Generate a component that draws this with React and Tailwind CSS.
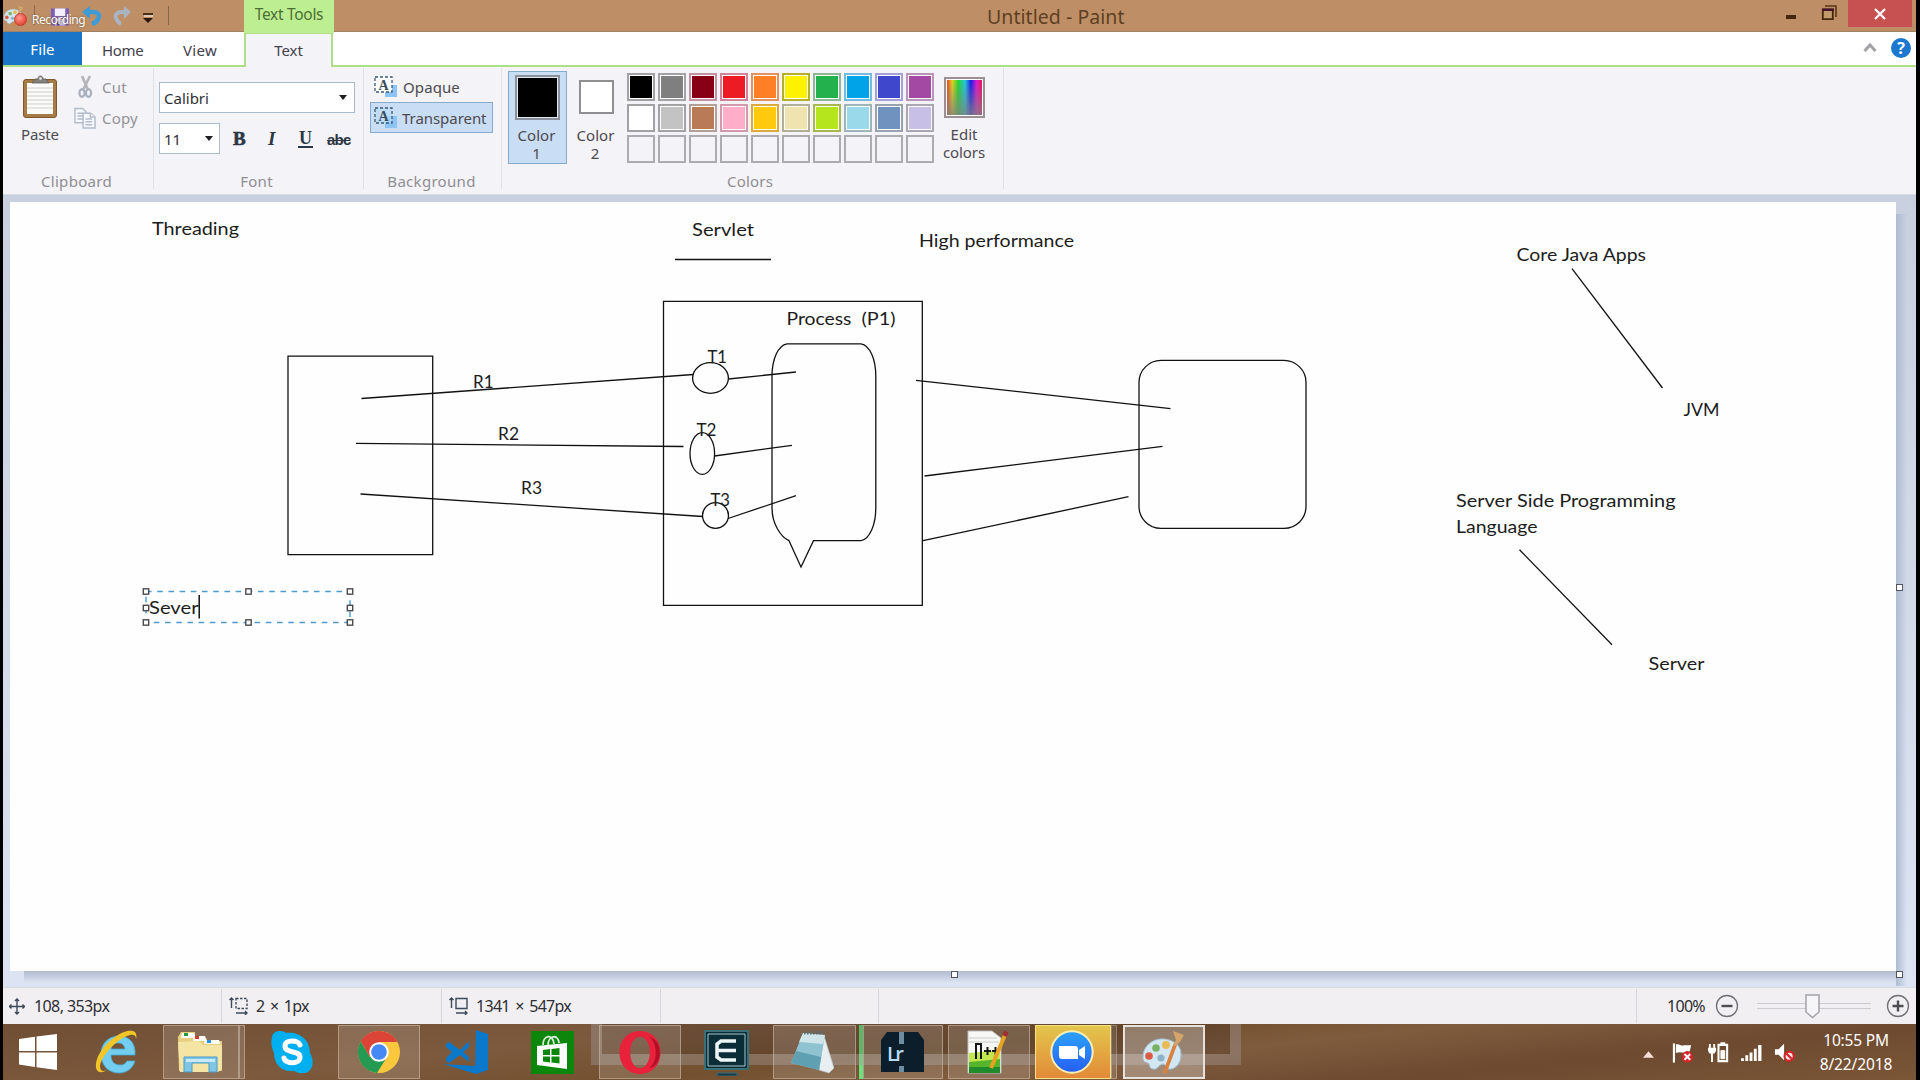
import React from "react";

const ui = "font-['Noto_Sans','Open_Sans',sans-serif]";

/* ---------- title bar ---------- */

function PaletteIcon({ className }) {
  return (
    <svg viewBox="0 0 44 44" className={className}>
      <path d="M2 27C2 15 13 8 23 9c9 1 17 6 17 15 0 8-4 14-10 15-5 1-4-5-8-5s-5 6-10 5-2-5-5-6-5-1-5-6z" fill="#d3e7f2" stroke="#a3c4d8" strokeWidth="1" />
      <circle cx="8" cy="26" r="3.800" fill="#dd5a45" />
      <circle cx="15" cy="18" r="3.800" fill="#79b265" />
      <circle cx="25" cy="15" r="4" fill="#e8bd58" />
      <circle cx="20" cy="28" r="3.600" fill="#8fb3c6" />
      <path d="M24 42l10-27" stroke="#d9813f" strokeWidth="3.600" strokeLinecap="round" />
      <path d="M32 16l3-6-3-9 11 4-4 7-5 4z" fill="#d5a468" />
    </svg>
  );
}

function TitleBar() {
  return (
    <div className="relative flex h-[32px] shrink-0 items-start border-b border-[#a08260] bg-[#be8f66]">
      <PaletteIcon className="mt-[5px] h-[21px] w-[21px]" />
      <div className="ml-[10px] mt-[5px] h-[20px] w-px bg-[#8d6c4e]" />
      <svg viewBox="0 0 20 20" className="ml-[16px] mt-[7px] h-[20px] w-[19px]">
        <path d="M0 1h19v18H0z" fill="#7b5fb4" />
        <path d="M4 1h11v8H4z" fill="#f3effa" />
        <path d="M4 12h11v7H4z" fill="#c9bce4" />
        <path d="M6 14h3v5H6z" fill="#5a4391" />
      </svg>
      <svg viewBox="0 0 20 20" className="ml-[12px] mt-[6px] h-[20px] w-[20px]">
        <path d="M3 6h8c6 0 7 4 5 7-1 3-3 4-6 5" fill="none" stroke="#3f9bd6" strokeWidth="4.500" />
        <path d="M8 0v13L0 6z" fill="#3f9bd6" />
      </svg>
      <svg viewBox="0 0 20 20" className="ml-[11px] mt-[6px] h-[20px] w-[20px]">
        <path d="M16 6H9c-6 0-8 4-5 8 1 2 2 3 4 4" fill="none" stroke="#a9b3c2" strokeWidth="4" />
        <path d="M11 0v13l7-7z" fill="#a9b3c2" />
      </svg>
      <svg viewBox="0 0 11 10" className="ml-[10px] mt-[13px] h-[10px] w-[11px]">
        <path d="M1 3h9" stroke="#fff" strokeWidth="1" />
        <path d="M0 1h10" stroke="#2a1709" strokeWidth="1.6" />
        <path d="M0 5h10L5 10z" fill="#2a1709" />
      </svg>
      <div className="ml-[14px] mt-[6px] h-[19px] w-px bg-[#84664b]" />

      <div className="ml-[75px] h-[33px] w-[90px] bg-[#bdee92] text-center">
        <div className={`pt-[4px] text-[15.5px] leading-[20px] tracking-[-0.3px] text-[#4c7034] ${ui}`}>Text Tools</div>
      </div>
      <div className={`ml-[653px] mt-[3px] whitespace-nowrap text-[19.5px] leading-[28px] tracking-[0.05px] text-[#5e3f22] ${ui}`}>Untitled - Paint</div>
      <div className="ml-auto flex">
        <svg viewBox="0 0 62 32" className="h-[32px] w-[62px]">
          <path d="M-1 15h11v4H-1z" fill="#46260c" />
          <path d="M39 6h11v11" fill="none" stroke="#5a3717" strokeWidth="1.6" />
          <path d="M36.8 9.5h10v9.700h-10z" fill="#c09a68" stroke="#46260c" strokeWidth="1.8" />
          <path d="M36 9.800h12" stroke="#46122c" strokeWidth="2.400" />
        </svg>
        <div className="mr-[4px] flex h-[27px] w-[64px] items-center justify-center bg-[#c75050]">
          <svg viewBox="0 0 12 12" className="h-[12px] w-[12px]">
            <path d="M1 1l10 10M11 1L1 11" stroke="#fff" strokeWidth="2.2" />
          </svg>
        </div>
      </div>

      <div className="absolute left-[11px] top-[13px] h-[13px] w-[13px] rounded-full border border-[#c33b2f] bg-radial-[at_40%_35%] from-[#ff9a8c] to-[#d92a1c]" />
      <div className={`absolute left-[29px] top-[11px] text-[12px] leading-[18px] tracking-[-0.45px] text-white [text-shadow:0_0_2px_#6b4d33] ${ui}`}>Recording</div>
    </div>
  );
}

function TabRow() {
  return (
    <div className={`flex h-[35px] shrink-0 border-b-2 border-[#aede86] bg-white text-[15px] leading-[20px] text-[#42404c] ${ui}`}>
      <div className="flex h-[33px] w-[79px] justify-center bg-[#1a75c9] pt-[7px] tracking-[0.1px] text-white">
        <span>File</span>
      </div>
      <div className="ml-[20px] mt-[8px] w-[44px] tracking-[-0.35px]">Home</div>
      <div className="ml-[37px] mt-[8px] w-[44px] tracking-[0.35px]">View</div>
      <div className="ml-[17px] h-[35px] w-[89px] border-x-2 border-t-2 border-[#aede86] bg-[#f4f3f8] pt-[6px] text-center tracking-[-0.1px]">Text</div>
      <svg viewBox="0 0 14 10" className="ml-auto mt-[10px] h-[10px] w-[14px]">
        <path d="M1.500 9L7 3l5.500 6" fill="none" stroke="#a3a1a5" strokeWidth="3" />
      </svg>
      <div className="ml-[14px] mr-[5px] mt-[6px] flex h-[20px] w-[20px] items-center justify-center rounded-full bg-[#1c78cf] text-[16px] font-bold text-white">?</div>
    </div>
  );
}

/* ---------- ribbon ---------- */

function Group({ width, label, labelClass = "", children }) {
  return (
    <div className={`flex shrink-0 flex-col ${width}`}>
      <div className="flex h-[104px]">{children}</div>
      <div className={`text-center text-[#8f8e93] ${labelClass}`}>{label}</div>
    </div>
  );
}

function Divider() {
  return <div className="mt-px h-[121px] w-px shrink-0 bg-[#e0e0e7]" />;
}

function Arrow() {
  return (
    <svg viewBox="0 0 8 5" className="h-[5px] w-[8px]">
      <path d="M0 0h8L4 5z" fill="#1d1d22" />
    </svg>
  );
}

function TextBackIcon({ solid }) {
  return (
    <svg viewBox="0 0 24 22" className="h-[22px] w-[24px]">
      <path d="M11 9h12v12H11z" fill="#8cc5f5" />
      <path d="M1 1h17v15H1z" fill={solid ? "#ffffff" : "#b9dcf8"} fillOpacity={solid ? 1 : 0.6} stroke="#3d5a74" strokeWidth="1.300" strokeDasharray="3 2" />
      <text x="4.500" y="14" fontFamily="Liberation Serif" fontWeight="bold" fontSize="14" fill="#3b4d60">A</text>
    </svg>
  );
}

const swatches = [
  ["bg-[#000000]", "border-[#a2a2a4]"],
  ["bg-[#7f7f7f]", "border-[#a2a2a4]"],
  ["bg-[#880015]", "border-[#c492a2]"],
  ["bg-[#ed1c24]", "border-[#d2849a]"],
  ["bg-[#ff7f27]", "border-[#e39160]"],
  ["bg-[#fff200]", "border-[#b3b12c]"],
  ["bg-[#22b14c]", "border-[#8db897]"],
  ["bg-[#00a2e8]", "border-[#73bce0]"],
  ["bg-[#3f48cc]", "border-[#a4a0d8]"],
  ["bg-[#a349a4]", "border-[#b795bb]"],
  ["bg-[#ffffff]", "border-[#a2a2a4]"],
  ["bg-[#c3c3c3]", "border-[#a2a2a4]"],
  ["bg-[#b97a57]", "border-[#b39f98]"],
  ["bg-[#ffaec9]", "border-[#d298ab]"],
  ["bg-[#ffc90e]", "border-[#dba93c]"],
  ["bg-[#efe4b0]", "border-[#b3ae98]"],
  ["bg-[#b5e61d]", "border-[#a4b84c]"],
  ["bg-[#99d9ea]", "border-[#9db4bb]"],
  ["bg-[#7092be]", "border-[#98a2b0]"],
  ["bg-[#c8bfe7]", "border-[#a9a5b5]"],
];
const emptySlots = Array.from({ length: 10 });

function Ribbon() {
  return (
    <div className={`flex h-[127px] shrink-0 bg-[#f4f3f8] text-[15px] leading-[20px] text-[#4c4a50] ${ui}`}>
      <Group width="w-[150px]" label="Clipboard" labelClass="pr-[3px] tracking-[0.3px]">
        <div className="ml-[15px] flex w-[44px] flex-col items-center pt-[8px]">
          <svg viewBox="0 0 36 44" className="h-[44px] w-[36px]">
            <rect x="1.500" y="4.500" width="33" height="38" rx="2.500" fill="#a67c46" stroke="#7d5a2d" />
            <path d="M5 8h26v31H5z" fill="#fbfbfa" />
            <path d="M5 13h26M5 17h26M5 21h26M5 25h26M5 29h26M5 33h26" stroke="#cfcfd2" strokeWidth="1.200" />
            <path d="M10 8l3-4h3c0-4 5-4 5 0h3l3 4z" fill="#84807c" stroke="#5f5c59" strokeWidth=".8" />
            <circle cx="18.500" cy="3.500" r="1.300" fill="#eee" />
          </svg>
          <div className="mt-[5px] tracking-[-0.15px]">Paste</div>
        </div>
        <div className="ml-[12px] pt-[8px] text-[#939298]">
          <div className="flex items-center">
            <svg viewBox="0 0 22 24" className="h-[24px] w-[22px]" fill="none">
              <path d="M8 1l6 14M16 1L9 15" stroke="#b5b4ba" strokeWidth="2.600" />
              <ellipse cx="8" cy="18" rx="2.600" ry="3.800" stroke="#a6b0be" strokeWidth="2.200" />
              <ellipse cx="14.500" cy="18" rx="2.600" ry="3.800" stroke="#a6b0be" strokeWidth="2.200" />
            </svg>
            <span className="ml-[6px] tracking-[0.2px]">Cut</span>
          </div>
          <div className="mt-[7px] flex items-center">
            <svg viewBox="0 0 23 24" className="h-[24px] w-[22px]" fill="#f7f8fb" stroke="#b1bccb" strokeWidth="1.500">
              <path d="M1 2h8l4 4v11H1z" />
              <path d="M3.500 7h6M3.500 10h6M3.500 13h6" />
              <path d="M9.500 7h8l4.500 4v11.500H9.500z" />
              <path d="M12 13h7M12 16h7M12 19h7M17 7v4h5" />
            </svg>
            <span className="ml-[6px] tracking-[0.2px]">Copy</span>
          </div>
        </div>
      </Group>
      <Divider />
      <Group width="w-[209px]" label="Font" labelClass="pr-[4px] tracking-[0.3px]">
        <div className="ml-[5px] flex flex-col pt-[15px]">
          <div className="flex h-[31px] w-[196px] items-center justify-between border border-[#a9bbcd] bg-white pl-[4px] pr-[7px] tracking-[0px] text-[#303038]">
            <span>Calibri</span>
            <Arrow />
          </div>
          <div className="mt-[10px] flex h-[31px] items-center text-[#2d3744]">
            <div className="flex h-[31px] w-[61px] items-center justify-between border border-[#a9bbcd] bg-white pl-[4px] pr-[6px] text-[#303038]">
              <span>11</span>
              <Arrow />
            </div>
            <span className="ml-[13px] w-[15px] font-['Liberation_Serif',serif] text-[19px] font-bold [-webkit-text-stroke:0.6px_#2d3744]">B</span>
            <span className="ml-[20px] w-[13px] font-['Liberation_Serif',serif] text-[19px] font-bold italic">I</span>
            <span className="ml-[17px] mt-[2px] w-[15px] border-b-2 border-[#2d3744] text-center font-['Liberation_Serif',serif] text-[18px] font-bold leading-[15px]">U</span>
            <span className="ml-[14px] mt-[3px] font-['Liberation_Sans',sans-serif] text-[15px] font-bold tracking-[-0.8px] line-through">abc</span>
          </div>
        </div>
      </Group>
      <Divider />
      <Group width="w-[137px]" label="Background" labelClass="pr-[2px] tracking-[0.3px]">
        <div className="ml-[6px] flex flex-col">
          <div className="mt-[5px] flex h-[30px] items-center pl-[4px]">
            <TextBackIcon solid />
            <span className="ml-[5px] tracking-[0.1px]">Opaque</span>
          </div>
          <div className="flex h-[31px] w-[123px] items-center border border-[#86abcf] bg-[#c9def5] pl-[3px]">
            <TextBackIcon />
            <span className="ml-[4px] tracking-[-0.05px]">Transparent</span>
          </div>
        </div>
      </Group>
      <Divider />
      <Group width="w-[501px]" label="Colors" labelClass="pr-[5px] tracking-[0.2px]">
        <div className="ml-[6px] mt-[4px] flex h-[93px] w-[59px] flex-col items-center border border-[#86abcf] bg-[#c9def5] pt-[3px] leading-[18px]">
          <div className="h-[45px] w-[45px] border-2 border-[#8a9199] bg-[#dfeaf6] p-px">
            <div className="h-full w-full bg-black" />
          </div>
          <div className="mt-[6px] pr-[2px] tracking-[0.1px]">Color</div>
          <div className="pr-[2px]">1</div>
        </div>
        <div className="ml-[7px] mt-[4px] flex w-[44px] flex-col items-center pt-[9px] leading-[18px]">
          <div className="h-[34px] w-[35px] border-2 border-[#8f8f92] bg-white" />
          <div className="mt-[12px] pr-[1px] tracking-[0.1px]">Color</div>
          <div className="pr-[2px]">2</div>
        </div>
        <div className="ml-[9px] mt-[6px] grid h-[90px] grid-cols-10 gap-[3px]">
          {swatches.map(([fill, edge], i) => (
            <div key={i} className={`h-[28px] w-[28px] border-2 bg-white p-px ${edge}`}>
              <div className={`h-full w-full ${fill}`} />
            </div>
          ))}
          {emptySlots.map((_, i) => (
            <div key={i} className="h-[28px] w-[28px] border-2 border-[#acacb0]" />
          ))}
        </div>
        <div className="ml-[2px] flex w-[56px] flex-col items-center pt-[10px] leading-[18px]">
          <div className="h-[41px] w-[41px] border-2 border-[#9c8f92] bg-white p-px">
            <div className="h-full w-full bg-[linear-gradient(to_top,#808080cc,#80808000),linear-gradient(to_right,#f04020,#e8d020_15%,#20d830_32%,#20c8e0_52%,#1818e8_68%,#e018d0_85%,#f01050)]" />
          </div>
          <div className="mt-[7px] tracking-[0px]">Edit</div>
          <div className="tracking-[-0.1px]">colors</div>
        </div>
      </Group>
      <Divider />
    </div>
  );
}

/* ---------- canvas ---------- */

const labels = [
  { t: "Threading", x: 152, y: 234.5, w: 87 },
  { t: "Servlet", x: 692, y: 236, w: 62 },
  { t: "High performance", x: 919, y: 247, w: 155 },
  { t: "Process", x: 786.5, y: 324.5, w: 65 },
  { t: "(P1)", x: 861.5, y: 324.5, w: 34 },
  { t: "R1", x: 473, y: 388, w: 20.5 },
  { t: "R2", x: 498, y: 440, w: 21 },
  { t: "R3", x: 521, y: 493.5, w: 21 },
  { t: "T1", x: 707.5, y: 362.5, w: 19.5 },
  { t: "T2", x: 696.5, y: 435.5, w: 20 },
  { t: "T3", x: 710.5, y: 505.5, w: 19.5 },
  { t: "Core Java Apps", x: 1516.5, y: 261, w: 129.5 },
  { t: "JVM", x: 1683.5, y: 416, w: 36 },
  { t: "Server Side Programming", x: 1456, y: 507, w: 219.5 },
  { t: "Language", x: 1456, y: 533, w: 81.5 },
  { t: "Server", x: 1648.5, y: 670, w: 56 },
  { t: "Sever", x: 149, y: 614, w: 49.5 },
];

const strokes = [
  [675, 259.5, 771, 259.5],
  [361.5, 398.5, 693.5, 374.5],
  [356, 443.3, 683.5, 446.5],
  [360.5, 494, 703, 516.5],
  [728.5, 379, 796, 372],
  [714.5, 456, 792, 445.3],
  [728, 518.5, 796, 495.7],
  [916, 380.3, 1170.5, 408.7],
  [924.5, 476, 1162.5, 446.3],
  [923, 540.7, 1128.5, 496.7],
  [1572, 268.7, 1662.5, 388],
  [1519.5, 549.7, 1612, 644.7],
];

const grips = [
  [146, 591.5], [248.5, 591.5], [350, 591.5],
  [146, 608], [350, 608],
  [146, 622.5], [248.5, 622.5], [350, 622.5],
];

function Drawing() {
  return (
    <svg viewBox="10 202 1887 769" className="block h-[769px] w-[1887px]">
      <g fill="none" stroke="#111" strokeWidth="1.3">
        <path d="M288 356.200H432.700V554.700H288z" />
        <path d="M663.500 301.400H922.300V605.300H663.500z" />
        <rect x="1139" y="360.400" width="167" height="168" rx="22" />
        <ellipse cx="710.500" cy="378" rx="17.900" ry="15.300" />
        <ellipse cx="702.300" cy="453.500" rx="12.300" ry="20.900" />
        <ellipse cx="715.500" cy="515.500" rx="13" ry="12.800" />
        <path d="M787 343.800H861C870 345 875.800 360 875.800 376V508C875.800 524 870 539 861 540.700H813.500L801 567L789 540.700C781 537 772 524 772 508V376C772 360 778 345 787 343.800z" />
        {strokes.map(([a, b, c, d], i) => (
          <path key={i} d={`M${a} ${b}L${c} ${d}`} />
        ))}
      </g>
      <g fontFamily="Lato, 'Liberation Sans', sans-serif" fontSize="18" fill="#1c1c1c">
        {labels.map(({ t, x, y, w }) => (
          <text key={t} x={x} y={y} textLength={w} lengthAdjust="spacingAndGlyphs">{t}</text>
        ))}
      </g>
      <path d="M146 591.500H350V622.500H146z" fill="none" stroke="#4f9bd0" strokeWidth="1.400" strokeDasharray="5.600 5.600" />
      {grips.map(([x, y], i) => (
        <rect key={i} x={x - 2.7} y={y - 2.7} width="5.400" height="5.400" fill="#fff" stroke="#4c4c50" strokeWidth="1.400" />
      ))}
      <path d="M199.200 595V618.500" stroke="#000" strokeWidth="1.400" />
    </svg>
  );
}

function Grip({ className }) {
  return <div className={`absolute h-[7px] w-[7px] border-[1.5px] border-[#50555f] bg-white ${className}`} />;
}

function Workspace() {
  return (
    <div className="relative h-[793px] shrink-0 overflow-hidden border-t border-[#d5dae6] bg-linear-to-b from-[#c8cfdf] to-[#dce4f4] pl-[7px] pt-[8px]">
      <div className="relative h-[769px] w-[1886px] bg-[#fefefe]">
        <div className="absolute left-full top-[12px] h-[772px] w-[11px] bg-linear-to-r from-[#aebbd1] to-[#aebbd100]" />
        <div className="absolute left-[14px] top-full h-[12px] w-[1873px] bg-linear-to-b from-[#b1bacf] to-[#b1bacf00]" />
        <div className="-mt-px">
          <Drawing />
        </div>
        <Grip className="left-[1886px] top-[382px]" />
        <Grip className="left-[1886px] top-[769px]" />
        <Grip className="left-[941px] top-[769px]" />
      </div>
    </div>
  );
}

/* ---------- status bar ---------- */

function StatusBar() {
  const sep = "h-[34px] w-px bg-[#d6d6da]";
  return (
    <div className={`flex h-[37px] shrink-0 items-center border-t border-[#d9dbe2] bg-[#f1eff2] text-[16px] leading-[20px] tracking-[-0.7px] text-[#2e2e34] ${ui}`}>
      <div className="flex w-[218px] items-center pl-[6px]">
        <svg viewBox="0 0 16 16" className="h-[17px] w-[16px]" fill="none" stroke="#3d4a5b" strokeWidth="1.400">
          <path d="M8 0v16M0 8h16M6 2.500L8 .5l2 2M6 13.500l2 2 2-2M2.500 6L.5 8l2 2M13.500 6l2 2-2 2" />
        </svg>
        <span className="ml-[9px] tracking-[-0.6px]">108, 353px</span>
      </div>
      <div className={sep} />
      <div className="flex w-[219px] items-center pl-[7px]">
        <svg viewBox="0 0 20 18" className="h-[18px] w-[20px]" fill="none" stroke="#3d4a5b" strokeWidth="1.400">
          <path d="M2.500 11V1M.5 3l2-2 2 2M7 16h11M16 14l2 2-2 2" />
          <path d="M7 1.500h11v10H7z" strokeDasharray="2.500 1.500" />
        </svg>
        <span className="ml-[7px] tracking-[-0.7px] [word-spacing:2px]">2 × 1px</span>
      </div>
      <div className={sep} />
      <div className="flex w-[218px] items-center pl-[7px]">
        <svg viewBox="0 0 20 18" className="h-[18px] w-[20px]" fill="none" stroke="#3d4a5b" strokeWidth="1.400">
          <path d="M2.500 11V1M.5 3l2-2 2 2M7 16h11M16 14l2 2-2 2M7 1.500h11v10H7z" />
        </svg>
        <span className="ml-[7px] tracking-[-0.7px] [word-spacing:2px]">1341 × 547px</span>
      </div>
      <div className={sep} />
      <div className="w-[217px]" />
      <div className={sep} />
      <div className="w-[757px]" />
      <div className={sep} />
      <div className="ml-[30px] w-[41px]">100%</div>
      <svg viewBox="0 0 24 24" className="ml-[7px] h-[24px] w-[24px] shrink-0" fill="none">
        <circle cx="12" cy="12" r="10.500" stroke="#6f6e73" strokeWidth="1.300" />
        <path d="M6.500 12h11" stroke="#4d4c52" strokeWidth="2.400" />
      </svg>
      <svg viewBox="0 0 114 26" className="ml-[18px] h-[26px] w-[114px] shrink-0">
        <path d="M0 10.500h114M0 15.500h114" stroke="#cbcbcf" strokeWidth="1.200" />
        <path d="M49 2h13v17l-6.500 5.500L49 19z" fill="#f6f5f8" stroke="#a3a2a8" strokeWidth="1.500" />
      </svg>
      <svg viewBox="0 0 24 24" className="ml-[15px] h-[24px] w-[24px] shrink-0" fill="none">
        <circle cx="12" cy="12" r="10.500" stroke="#6f6e73" strokeWidth="1.300" />
        <path d="M6.500 12h11M12 6.500v11" stroke="#4d4c52" strokeWidth="2.400" />
      </svg>
    </div>
  );
}

/* ---------- taskbar ---------- */

function Slot({ className, children }) {
  return <div className={`relative flex h-[54px] shrink-0 items-center justify-center ${className}`}>{children}</div>;
}

const open = "border border-[#bfb0a0b0] bg-[#ffffff24]";

function Taskbar() {
  const ic = "h-[44px] w-[44px]";
  return (
    <div className={`relative flex min-h-0 flex-1 items-start overflow-hidden bg-[linear-gradient(174deg,#6f4e34_0%,#7d5a3d_30%,#73502f_48%,#805c3e_60%,#6d4a30_78%,#7b5637_100%)] pt-px ${ui}`}>
      <div className="absolute left-[588px] top-0 h-[41px] w-[650px] border-x-[11px] border-b-[11px] border-[#ffffff38] bg-[#2c202038]" />

      <Slot className="ml-[7px] w-[56px]">
        <svg viewBox="0 0 38 36" className="h-[36px] w-[38px]" fill="#fff">
          <path d="M0 5l16-2.300V17H0zM17.500 2.500L38 0v17H17.500zM0 18.500h16V33L0 30.500zM17.500 18.500H38V36l-20.500-2.800z" />
        </svg>
      </Slot>
      <Slot className="ml-[16px] w-[70px]">
        <svg viewBox="0 0 44 44" className={ic}>
          <path d="M40 25H16c0 7 4 10 9 10 4 0 6-2 7-4h8c-2 7-8 12-16 12C13 43 6 35 6 24 6 13 14 6 24 6s17 7 16 19zM16 19h14c-1-4-3-6-7-6s-6 2-7 6z" fill="#72cdef" fillRule="evenodd" stroke="#43a8d6" strokeWidth=".8" />
          <path d="M12 40C6 44 0 43 1 34 2 22 16 7 29 2c8-3 14-1 12 7 0-5-4-5-9-3C20 11 6 27 5 36c0 5 3 6 7 4z" fill="#f0c628" />
        </svg>
      </Slot>
      <Slot className={`ml-[11px] w-[76px] ${open}`}>
        <svg viewBox="0 0 46 42" className="mr-[2px] h-[42px] w-[46px]">
          <path d="M1 6L4 1h14v5l11 1 1 3h15v30H2z" fill="#e6cf80" />
          <path d="M5 2h12l2 5H4z" fill="#fff" />
          <path d="M17 5h11l2 5H16zM28 9h14l1 4H27z" fill="#fdfdf8" />
          <path d="M7 2h4v3H7z" fill="#279a3c" /><path d="M18 5h4v3h-4z" fill="#d43c31" /><path d="M30 9h4v3h-4z" fill="#2a8fd8" />
          <path d="M1 11l21-1 4 4h19v24l-4 3H3z" fill="#f4e5a4" />
          <path d="M7 26h33v15h-8v-9H15v9H7z" fill="#81c5e6" stroke="#4b9bc8" strokeWidth="1" />
          <path d="M9 28h29v3H9z" fill="#c9e9f7" />
        </svg>
      </Slot>
      <div className={`h-[54px] w-[6px] shrink-0 ${open}`} />
      <Slot className="ml-[12px] w-[69px]">
        <svg viewBox="0 0 44 44" className={ic}>
          <path d="M2 7C3 0 13 0 16 3 28 1 40 9 40 23 45 31 43 43 33 43 27 44 26 41 23 41 10 42 4 33 4 23 1 17 1 11 2 7z" fill="#00aff0" />
          <path d="M30 15c-2-5-15-6-15 1 0 8 15 4 15 11 0 8-15 7-16 1" fill="none" stroke="#fff" strokeWidth="5" strokeLinecap="round" />
        </svg>
      </Slot>
      <Slot className={`ml-[12px] w-[82px] ${open}`}>
        <svg viewBox="0 0 44 44" className={`mr-[1px] ${ic}`}>
          <circle cx="22" cy="22" r="21" fill="#fbc73c" />
          <path d="M22 22L3.800 11.500A21 21 0 0 1 40.200 11.500H22z" fill="#db4437" />
          <path d="M3.800 11.500A21 21 0 0 0 20 43L30 27 22 22 13 27z" fill="#259a53" />
          <path d="M3.800 11.500L13 27 22 12H40A21 21 0 0 0 3.800 11.500z" fill="#db4437" />
          <circle cx="22" cy="22" r="9.800" fill="#fff" />
          <circle cx="22" cy="22" r="7.800" fill="#4688f4" />
        </svg>
      </Slot>
      <Slot className="ml-[23px] w-[46px]">
        <svg viewBox="0 0 46 46" className="h-[46px] w-[46px]" fill="#0a79cb">
          <path d="M33 1l12 4v36l-12 4L0 35l32 2z" />
          <path fillRule="evenodd" d="M3 15l3-2 11 8 9-9v21l-9-7-11 8-3-2v-3l6-6-6-5zM26 18l-6 5 6 5z" />
        </svg>
      </Slot>
      <Slot className="ml-[42px] w-[43px]">
        <svg viewBox="0 0 43 43" className="h-[43px] w-[43px]">
          <path d="M0 0h43v43H0z" fill="#0c870c" />
          <path d="M6 15l30-3v26L6 34z" fill="#fff" />
          <path d="M12 14c0-10 10-12 11-1M17 14c0-9 10-12 11-2" fill="none" stroke="#d9efd9" strokeWidth="1.800" />
          <path d="M12 19l7-1v6h-7zM20.500 18l8-1v7h-8zM12 25.500h7v6l-7-1zM20.500 25.500h8v7l-8-1z" fill="#0c870c" />
        </svg>
      </Slot>
      <Slot className={`ml-[25px] w-[82px] ${open}`}>
        <svg viewBox="0 0 44 46" className="h-[45px] w-[44px]">
          <path fillRule="evenodd" d="M22 1C34 1 43 10 43 23S34 45 22 45 1 36 1 23 10 1 22 1zM22 7c-6 0-10 7-10 16s4 16 10 16 10-7 10-16S28 7 22 7z" fill="#e8223a" />
          <path d="M31 7C40 12 41 33 31 39c14-2 16-28 0-32z" fill="#b30f27" />
        </svg>
      </Slot>
      <Slot className="ml-[23px] w-[45px]">
        <svg viewBox="0 0 45 46" className="mt-[2px] h-[46px] w-[45px]">
          <path d="M1 1h43v38H1z" fill="#0b2d38" stroke="#3b6f78" strokeWidth="2" />
          <path d="M4 4h37v32H4z" fill="none" stroke="#a6c7cb" strokeWidth="1" />
          <path d="M32 11H17l-4 3v13l4 3h15M14 20.500h18" fill="none" stroke="#eef5f6" strokeWidth="3.500" />
          <path d="M13 43h20v3H13z" fill="#153c46" stroke="#3b6f78" />
        </svg>
      </Slot>
      <Slot className={`ml-[24px] w-[83px] ${open}`}>
        <svg viewBox="0 0 44 44" className={`mr-[5px] ${ic}`}>
          <path d="M34 6l10 32-5 5-10-3z" fill="#e9eff0" stroke="#b9c6c9" strokeWidth=".7" />
          <path d="M13 3l22 2-6 35L1 33z" fill="#8fc3cf" />
          <path d="M13 3l22 2-2 9-24-2z" fill="#cfe5ea" />
          <path d="M1 33l5-12 25 6-2 13z" fill="#5fa0b2" />
          <path d="M14 3h20" stroke="#5d6a6e" strokeWidth="3" strokeDasharray="1.500 1.500" />
        </svg>
      </Slot>
      <div className="ml-[3px] h-[54px] w-[4px] shrink-0 bg-[#69e27b]" />
      <Slot className={`w-[80px] ${open}`}>
        <svg viewBox="0 0 43 40" className="mr-[2px] h-[40px] w-[43px]">
          <path d="M6 0h31l6 8v32H0V8z" fill="#0c1d2b" />
          <path d="M18 0h5v12h-5zM18 34h5v6h-5z" fill="#6f8da0" />
          <text x="6" y="29" fontFamily="Open Sans, sans-serif" fontWeight="600" fontSize="20" fill="#b6dcf5" textLength="17">Lr</text>
        </svg>
      </Slot>
      <Slot className={`ml-[5px] w-[82px] ${open}`}>
        <svg viewBox="0 0 44 46" className="mt-px h-[46px] w-[44px]">
          <path d="M1 1h24l9 7v35H1z" fill="#f7f8f6" stroke="#bcbfb9" strokeWidth="1" />
          <path d="M2 8h28M2 12h30" stroke="#c9ccc8" />
          <path d="M2 24h31v18H2z" fill="#57b52c" />
          <path d="M2 23l31-3v9L2 32z" fill="#c3e650" />
          <path d="M2 37h31v6H2z" fill="#1f8b2c" />
          <path d="M9 29V14h5v15M17 21h7M20.500 17v8M25 21h7M28.500 17v8" fill="none" stroke="#14181a" strokeWidth="2" />
          <path d="M24 38l14-33" stroke="#e5a321" strokeWidth="4" />
          <path d="M37.500 6l2-4.500" stroke="#a32c2e" strokeWidth="4.500" />
        </svg>
      </Slot>
      <Slot className="ml-[5px] w-[76px] border border-[#f6e387] bg-linear-to-b from-[#e3c54c] to-[#e28a38]">
        <svg viewBox="0 0 44 44" className={`mr-[2px] ${ic}`}>
          <defs>
            <linearGradient id="meet" x1="0" y1="0" x2="0" y2="1"><stop offset="0" stopColor="#2ba3fb" /><stop offset="1" stopColor="#265ef4" /></linearGradient>
          </defs>
          <circle cx="22" cy="22" r="20.700" fill="url(#meet)" stroke="#fbf0b4" strokeWidth="2" />
          <path d="M9 16h16q3 0 3 3v10H12q-3 0-3-3zM29 20l6-4v13l-6-4z" fill="#fff" />
        </svg>
      </Slot>
      <div className={`h-[54px] w-[6px] shrink-0 ${open}`} />
      <Slot className="ml-[6px] w-[82px] border-2 border-[#e9e2dc] bg-[#ffffff4d]">
        <PaletteIcon className={`mr-[2px] ${ic}`} />
      </Slot>

      <div className="ml-auto flex h-[54px] items-center">
        <svg viewBox="0 0 10 6" className="mt-[4px] h-[7px] w-[11px]"><path d="M0 6L5 0l5 6z" fill="#f7ded6" /></svg>
        <svg viewBox="0 0 24 24" className="ml-[18px] mt-px h-[24px] w-[23px]">
          <path d="M2 2v20" stroke="#fff" strokeWidth="2.200" />
          <path d="M4 3c4-1 5 2 9 1h7l-2 8c-5 1-8-2-14 0z" fill="#fff" />
          <circle cx="16" cy="16" r="6" fill="#d3262b" />
          <path d="M13 13l6 6M19 13l-6 6" stroke="#fff" strokeWidth="2" />
        </svg>
        <svg viewBox="0 0 24 24" className="ml-[12px] h-[23px] w-[23px]" fill="none" stroke="#fff">
          <path d="M12 4h9v17h-9zM14 2.500h5" strokeWidth="2.200" />
          <path d="M14.500 10h4v8.500h-4z" fill="#fff" />
          <path d="M3 3v5M7.500 3v5M5.200 12v10" strokeWidth="2" />
          <path d="M1 7h8.500v3L8 13H2.500L1 10z" fill="#fff" stroke="none" />
        </svg>
        <svg viewBox="0 0 24 20" className="ml-[10px] h-[19px] w-[23px]" fill="#fff">
          <path d="M1 16h3v3H1zM5.500 13h3v6h-3zM10 10h3v9h-3zM14.500 6h3v13h-3zM19 2h3.500v17H19z" />
        </svg>
        <svg viewBox="0 0 24 24" className="ml-[11px] mt-px h-[22px] w-[22px]">
          <path d="M1 8h4l6-6v18l-6-6H1z" fill="#fff" />
          <circle cx="16.500" cy="15.500" r="5" fill="#f5e6e4" stroke="#d3262b" strokeWidth="2.400" />
          <path d="M13 12l7 7" stroke="#d3262b" strokeWidth="2.400" />
        </svg>
        <div className="ml-[16px] mr-[16px] w-[88px] whitespace-nowrap text-center text-[15.5px] leading-[24px] tracking-[-0.2px] text-white">
          <div>10:55 PM</div>
          <div className="tracking-[-0.1px]">8/22/2018</div>
        </div>
      </div>
    </div>
  );
}

export default function App() {
  return (
    <div className="flex h-[1080px] w-[1920px] flex-col overflow-hidden bg-black pl-[3px] pr-[4px]">
      <TitleBar />
      <TabRow />
      <Ribbon />
      <Workspace />
      <StatusBar />
      <Taskbar />
    </div>
  );
}
